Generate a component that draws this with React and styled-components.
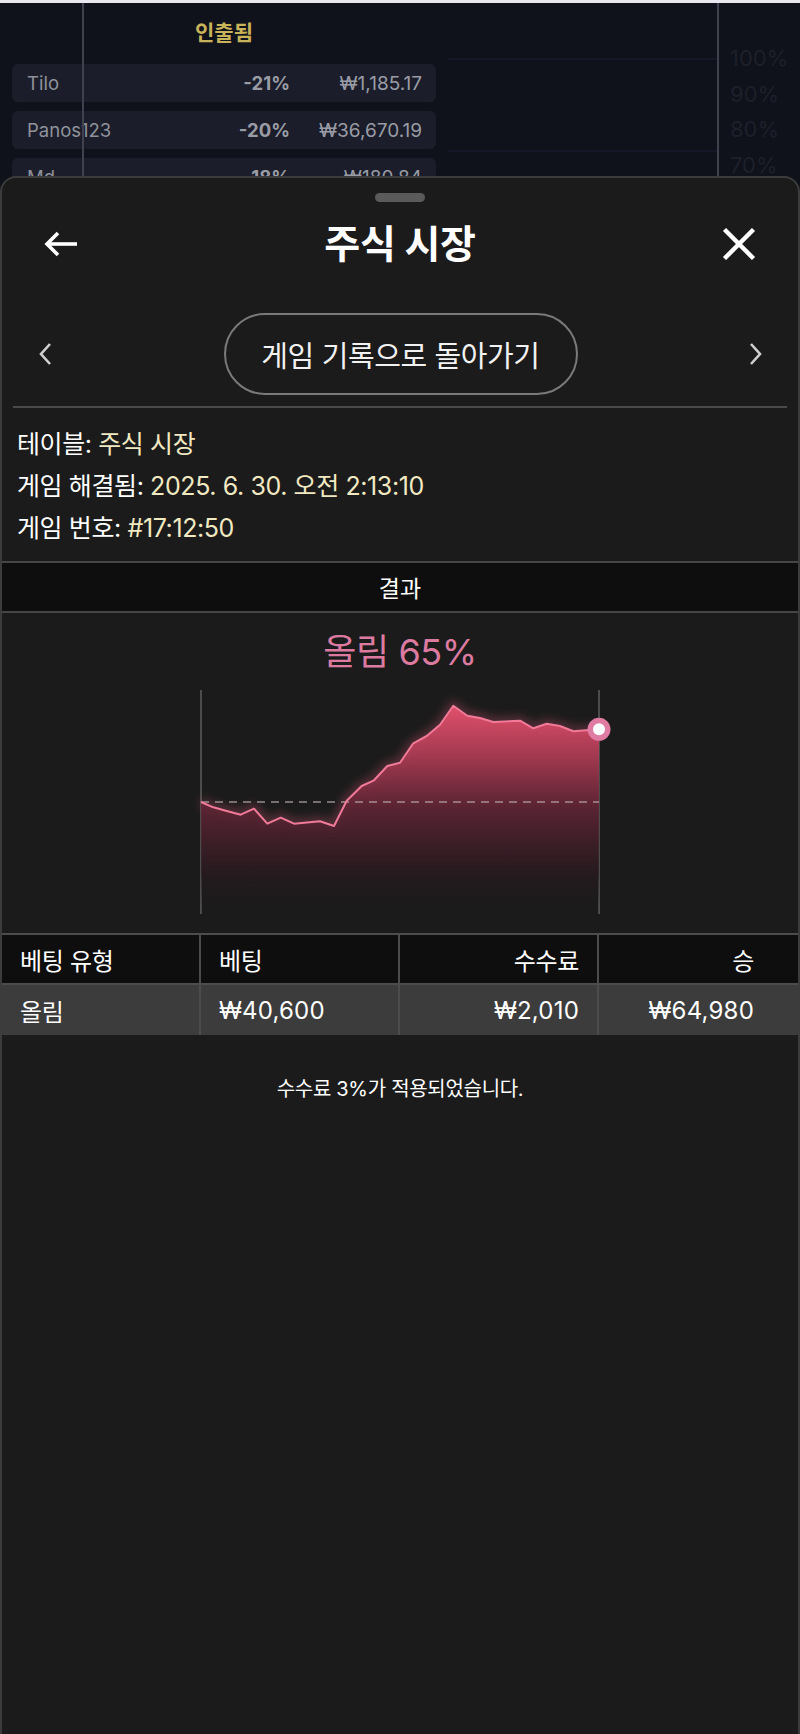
import React from "react";
import styled, { createGlobalStyle } from "styled-components";

const FONT = `"Inter", "Noto Sans CJK KR", sans-serif`;

const GlobalStyle = createGlobalStyle`
  html, body { margin: 0; padding: 0; background: #0f111b; }
  body { font-family: ${FONT}; -webkit-font-smoothing: antialiased; }
  * { box-sizing: border-box; }
`;

const Page = styled.div`
  position: relative;
  width: 800px;
  height: 1734px;
  overflow: hidden;
  background: #0f111b;
`;

const TopStrip = styled.div`
  height: 3px;
  background: #e8e8ee;
`;

const BgGrid = styled.div`
  display: grid;
  grid-template-columns: 448px 1fr 83px;
  height: 200px;
`;

const LeftPane = styled.div`
  padding: 0 12px;
  display: flex;
  flex-direction: column;
`;

const ColTitle = styled.div`
  height: 56px;
  display: flex;
  align-items: center;
  justify-content: center;
  color: #c8b25a;
  font-weight: 700;
  font-size: 21px;
  margin-bottom: 5px;
`;

const BgRows = styled.div`
  display: flex;
  flex-direction: column;
  gap: 9px;
`;

const BgRow = styled.div`
  height: 38px;
  width: 424px;
  border-radius: 6px;
  background: #1b1e2a;
  display: grid;
  grid-template-columns: 1fr 80px 132px;
  align-items: center;
  padding: 0 14px 0 15px;
  color: #8f929b;
  font-size: 18.5px;
`;

const BgName = styled.span``;
const BgPct = styled.span`
  text-align: right;
  font-weight: 700;
  color: #9a9ca5;
`;
const BgAmt = styled.span`
  text-align: right;
  color: #9a9ca5;
  font-size: 19px;
`;

const ChartPane = styled.div`
  background-image: repeating-linear-gradient(
    to bottom,
    transparent 0px,
    transparent 55px,
    #151826 55px,
    #151826 57px,
    transparent 57px,
    transparent 92px
  );
`;

const ScaleCol = styled.div`
  border-left: 2px solid #3f424c;
  padding: 42px 0 0 11px;
  display: flex;
  flex-direction: column;
  gap: 9px;
`;

const ScaleLabel = styled.span`
  color: #1d202a;
  font-size: 22px;
  line-height: 26.5px;
`;

const OverLine = styled.div`
  position: absolute;
  left: 82px;
  top: 3px;
  width: 2px;
  height: 180px;
  background: #3f424c;
`;

const Sheet = styled.div`
  position: absolute;
  top: 176px;
  left: 0;
  right: 0;
  bottom: 0;
  background: #1b1b1b;
  border: 2px solid #3c3c3c;
  border-bottom: none;
  border-radius: 16px 16px 0 0;
  display: flex;
  flex-direction: column;
  color: #fff;
`;

const Handle = styled.div`
  align-self: center;
  margin-top: 15px;
  width: 50px;
  height: 9px;
  border-radius: 5px;
  background: #5a5a5a;
`;

const Header = styled.div`
  height: 84px;
  display: flex;
  align-items: center;
  justify-content: space-between;
  padding: 0 41px;
`;

const IconBtn = styled.button`
  background: none;
  border: none;
  padding: 0;
  width: 36px;
  height: 34px;
  display: flex;
  align-items: center;
  justify-content: center;
  cursor: pointer;
`;

const Title = styled.h1`
  margin: 0;
  font-size: 39px;
  line-height: 46px;
  font-weight: 700;
  color: #fff;
  letter-spacing: -0.3px;
`;

const NavRow = styled.div`
  margin-top: 27px;
  height: 82px;
  display: flex;
  align-items: center;
  justify-content: space-between;
  padding: 0 34px 0 35px;
`;

const Pill = styled.button`
  height: 82px;
  width: 354px;
  border-radius: 41px;
  border: 2px solid #7a7a7a;
  background: transparent;
  color: #f2f2f2;
  font-family: ${FONT};
  font-size: 29px;
  font-weight: 400;
  letter-spacing: -0.4px;
  cursor: pointer;
  padding: 0;
`;

const Divider = styled.div`
  margin: 11px 11px 0;
  height: 2px;
  background: #4a4a4a;
`;

const Info = styled.div`
  padding: 15px 15px 12px;
  display: flex;
  flex-direction: column;
`;

const InfoLine = styled.div`
  font-size: 25px;
  line-height: 42px;
  letter-spacing: -0.4px;
  color: #fff;
`;

const InfoValue = styled.span`
  color: #f1e9c2;
`;

const ResultBar = styled.div`
  height: 52px;
  border-top: 2px solid #464646;
  border-bottom: 2px solid #464646;
  background: #0e0e0e;
  display: flex;
  align-items: center;
  justify-content: center;
  font-size: 23px;
  color: #fff;
`;

const Outcome = styled.div`
  margin-top: 18px;
  text-align: center;
  font-size: 36px;
  line-height: 42px;
  color: #dc7aa0;
  letter-spacing: -0.4px;
`;

const ChartWrap = styled.div`
  margin-top: 17px;
  align-self: center;
  width: 400px;
  height: 224px;
`;

const Table = styled.div`
  margin-top: 19px;
  display: grid;
  grid-template-columns: repeat(4, 1fr);
  border-top: 2px solid #4c4c4c;
`;

const Cell = styled.div`
  height: 50px;
  display: flex;
  align-items: center;
  justify-content: ${(p) => (p.$right ? "flex-end" : "flex-start")};
  padding: 0 ${(p) => (p.$last ? "44px" : "18px")} 0 18px;
  background: ${(p) => (p.$head ? "#0e0e0e" : "#3c3c3c")};
  border-right: ${(p) => (p.$end ? "none" : "2px solid #4c4c4c")};
  border-bottom: ${(p) => (p.$head ? "2px solid #4c4c4c" : "none")};
  font-size: 24px;
  color: #fff;
  letter-spacing: ${(p) => (p.$num ? "0.2px" : "-0.3px")};
`;

const Note = styled.p`
  margin: 42px 0 0;
  text-align: center;
  font-size: 20px;
  line-height: 24px;
  color: #fff;
  letter-spacing: -0.3px;
`;

const pts = [
  [1, 112], [13.3, 117.3], [26.7, 121], [40.7, 124.7], [54, 118.7], [67.3, 133.7],
  [80.7, 127.7], [94, 133.7], [120, 131.3], [134, 136], [146.7, 110.7], [161.7, 96],
  [174, 90.3], [187.3, 76], [200, 72.7], [213.3, 53.3], [226.7, 46], [240, 34.7],
  [253.3, 15.7], [267.3, 25.7], [280, 28], [293.3, 32], [320, 30.7], [333.3, 38.3],
  [346.7, 33.7], [360, 36], [373.3, 41.3], [399, 39.3],
];

function Chart() {
  const line = pts.map((p, i) => `${i ? "L" : "M"}${p[0]} ${p[1]}`).join(" ");
  const area = `${line} L399 224 L1 224 Z`;
  return (
    <svg width="400" height="224" viewBox="0 0 400 224" style={{ overflow: "visible", display: "block" }}>
      <defs>
        <linearGradient id="fillG" x1="0" y1="15" x2="0" y2="224" gradientUnits="userSpaceOnUse">
          <stop offset="0" stopColor="#e2506c" stopOpacity="1" />
          <stop offset="0.25" stopColor="#a83a52" stopOpacity="0.95" />
          <stop offset="0.5" stopColor="#5e2434" stopOpacity="0.9" />
          <stop offset="0.8" stopColor="#2a1a1f" stopOpacity="0.8" />
          <stop offset="1" stopColor="#1b1b1b" stopOpacity="0" />
        </linearGradient>
        <filter id="glow" x="-20%" y="-50%" width="140%" height="200%">
          <feGaussianBlur stdDeviation="5" />
        </filter>
      </defs>
      <line x1="1" y1="0" x2="1" y2="224" stroke="#5e5e5e" strokeWidth="1.5" />
      <line x1="399" y1="0" x2="399" y2="224" stroke="#5e5e5e" strokeWidth="1.5" />
      <path d={line} fill="none" stroke="#e8607f" strokeWidth="8" opacity="0.35" filter="url(#glow)" />
      <path d={area} fill="url(#fillG)" />
      <line x1="1" y1="112" x2="399" y2="112" stroke="#b7a7ab" strokeWidth="1.5" strokeDasharray="8 6" opacity="0.8" />
      <path d={line} fill="none" stroke="#f07a98" strokeWidth="2" strokeLinejoin="round" />
      <circle cx="399" cy="39.3" r="11.5" fill="#e07ca4" />
      <circle cx="399" cy="39.3" r="6" fill="#ffffff" />
    </svg>
  );
}

const BackIcon = () => (
  <svg width="36" height="26" viewBox="0 0 36 26" fill="none">
    <path d="M34 13H4" stroke="#fff" strokeWidth="3.6" />
    <path d="M15 2L4 13L15 24" stroke="#fff" strokeWidth="3.6" />
  </svg>
);

const CloseIcon = () => (
  <svg width="34" height="32" viewBox="0 0 34 32" fill="none">
    <path d="M2.5 1.5L31.5 30.5M31.5 1.5L2.5 30.5" stroke="#fff" strokeWidth="4.4" />
  </svg>
);

const Chevron = ({ dir }) => (
  <svg width="16" height="24" viewBox="0 0 16 24" fill="none">
    {dir === "left" ? (
      <path d="M13 2L4 12L13 22" stroke="#d0d0d0" strokeWidth="2.6" />
    ) : (
      <path d="M3 2L12 12L3 22" stroke="#d0d0d0" strokeWidth="2.6" />
    )}
  </svg>
);

const bgRows = [
  ["Tilo", "-21%", "₩1,185.17"],
  ["Panos123", "-20%", "₩36,670.19"],
  ["Md", "-18%", "₩180.84"],
];

export default function App() {
  return (
    <Page>
      <GlobalStyle />
      <TopStrip />
      <BgGrid>
        <LeftPane>
          <ColTitle>인출됨</ColTitle>
          <BgRows>
            {bgRows.map((r) => (
              <BgRow key={r[0]}>
                <BgName>{r[0]}</BgName>
                <BgPct>{r[1]}</BgPct>
                <BgAmt>{r[2]}</BgAmt>
              </BgRow>
            ))}
          </BgRows>
        </LeftPane>
        <ChartPane />
        <ScaleCol>
          <ScaleLabel>100%</ScaleLabel>
          <ScaleLabel>90%</ScaleLabel>
          <ScaleLabel>80%</ScaleLabel>
          <ScaleLabel>70%</ScaleLabel>
        </ScaleCol>
      </BgGrid>
      <OverLine />

      <Sheet>
        <Handle />
        <Header>
          <IconBtn aria-label="뒤로">
            <BackIcon />
          </IconBtn>
          <Title>주식 시장</Title>
          <IconBtn aria-label="닫기">
            <CloseIcon />
          </IconBtn>
        </Header>
        <NavRow>
          <Chevron dir="left" />
          <Pill>게임 기록으로 돌아가기</Pill>
          <Chevron dir="right" />
        </NavRow>
        <Divider />
        <Info>
          <InfoLine>
            테이블: <InfoValue>주식 시장</InfoValue>
          </InfoLine>
          <InfoLine>
            게임 해결됨: <InfoValue>2025. 6. 30. 오전 2:13:10</InfoValue>
          </InfoLine>
          <InfoLine>
            게임 번호: <InfoValue>#17:12:50</InfoValue>
          </InfoLine>
        </Info>
        <ResultBar>결과</ResultBar>
        <Outcome>올림 65%</Outcome>
        <ChartWrap>
          <Chart />
        </ChartWrap>
        <Table>
          <Cell $head>베팅 유형</Cell>
          <Cell $head>베팅</Cell>
          <Cell $head $right>수수료</Cell>
          <Cell $head $right $last $end>승</Cell>
          <Cell>올림</Cell>
          <Cell $num>₩40,600</Cell>
          <Cell $right $num>₩2,010</Cell>
          <Cell $right $last $end $num>₩64,980</Cell>
        </Table>
        <Note>수수료 3%가 적용되었습니다.</Note>
      </Sheet>
    </Page>
  );
}
